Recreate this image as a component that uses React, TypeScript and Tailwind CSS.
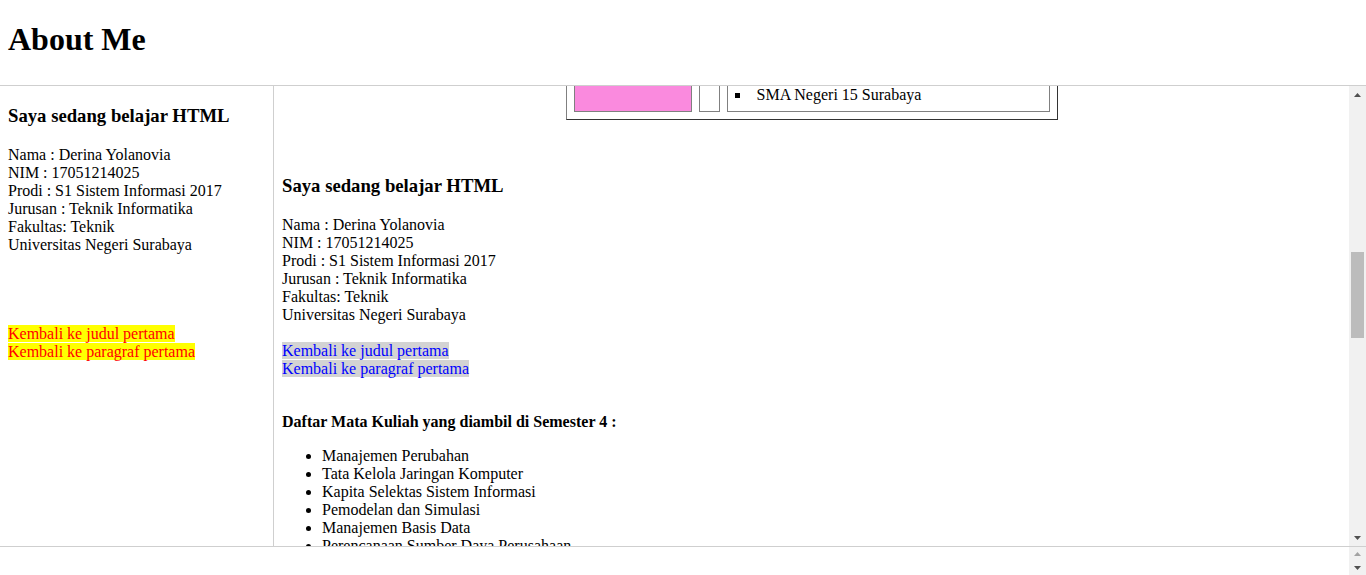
import React from 'react'

const biodata = [
  'Nama : Derina Yolanovia',
  'NIM : 17051214025',
  'Prodi : S1 Sistem Informasi 2017',
  'Jurusan : Teknik Informatika',
  'Fakultas: Teknik',
  'Universitas Negeri Surabaya',
]

const matkul = [
  'Manajemen Perubahan',
  'Tata Kelola Jaringan Komputer',
  'Kapita Selektas Sistem Informasi',
  'Pemodelan dan Simulasi',
  'Manajemen Basis Data',
  'Perencanaan Sumber Daya Perusahaan',
]

function Arrow({ up, color = '#505050' }: { up?: boolean; color?: string }) {
  return (
    <svg width="7" height="4" viewBox="0 0 7 4">
      {up ? <path d="M0 4 L3.5 0 L7 4 Z" fill={color} /> : <path d="M0 0 L7 0 L3.5 4 Z" fill={color} />}
    </svg>
  )
}

function Biodata() {
  return (
    <>
      <h3 className="mt-[18.72px] mb-[18.72px] text-[18.72px] font-bold leading-[22.5px]">
        Saya sedang belajar HTML
      </h3>
      <div className="leading-[18px]">
        {biodata.map((line) => (
          <div key={line}>{line}</div>
        ))}
      </div>
    </>
  )
}

export default function App() {
  return (
    <div className="flex h-[575px] w-[1366px] flex-col overflow-hidden bg-white font-['Liberation_Serif','Times_New_Roman',serif] text-base text-black">
      {/* top frame */}
      <header className="h-[86px] shrink-0 border-b border-[#cfcfcf] px-2">
        <h1 className="mt-[21.44px] text-[32px] font-bold leading-[37px]">About Me</h1>
      </header>

      {/* middle frames */}
      <div className="flex h-[460px] shrink-0">
        <aside className="w-[274px] shrink-0 border-r border-[#cfcfcf] px-2">
          <Biodata />
          <div className="mt-[71px] leading-[18px]">
            <div>
              <a className="bg-[#ffff00] text-[#ff0000]">Kembali ke judul pertama</a>
            </div>
            <div>
              <a className="bg-[#ffff00] text-[#ff0000]">Kembali ke paragraf pertama</a>
            </div>
          </div>
        </aside>

        <main className="flex min-w-0 flex-1">
          <div className="min-w-0 flex-1 overflow-hidden px-2">
            {/* bottom of the table, rest scrolled above */}
            <div className="mx-auto flex w-[492px] gap-[7px] border border-t-0 border-r-[#333] border-b-[#333] border-l-[#808080] px-[7px] pb-[7px]">
              <div className="w-[118px] border border-t-0 border-[#808080] bg-[#fa8ade]" />
              <div className="w-[21px] border border-t-0 border-[#808080]" />
              <div className="w-[323px] border border-t-0 border-[#808080] pb-[7px]">
                <div className="flex items-center pl-[7px] leading-[18px]">
                  <span className="mt-[1px] h-[5px] w-[5px] bg-black" />
                  <span className="ml-[17px]">SMA Negeri 15 Surabaya</span>
                </div>
              </div>
            </div>

            <div className="mt-[55px]">
              <Biodata />
            </div>

            <div className="mt-[18px] leading-[18px]">
              <div>
                <a className="bg-[#d3d3d3] text-[#0000ff]">Kembali ke judul pertama</a>
              </div>
              <div>
                <a className="bg-[#d3d3d3] text-[#0000ff]">Kembali ke paragraf pertama</a>
              </div>
            </div>

            <p className="mt-[35px] font-bold leading-[18px]">Daftar Mata Kuliah yang diambil di Semester 4 :</p>
            <ul className="mt-4 list-disc pl-10 leading-[18px]">
              {matkul.map((m) => (
                <li key={m}>{m}</li>
              ))}
            </ul>
          </div>

          {/* scrollbar */}
          <div className="flex w-[17px] shrink-0 flex-col bg-[#f1f1f1]">
            <div className="flex h-[17px] items-center justify-center">
              <Arrow up />
            </div>
            <div className="flex-1 px-[2px] pt-[149px]">
              <div className="h-[86px] bg-[#bcbcbc]" />
            </div>
            <div className="flex h-[17px] items-center justify-center">
              <Arrow />
            </div>
          </div>
        </main>
      </div>

      {/* bottom frame */}
      <footer className="flex flex-1 border-t border-[#cfcfcf]">
        <div className="flex-1" />
        <div className="flex w-[17px] flex-col bg-[#f1f1f1]">
          <div className="flex h-[14px] items-center justify-center">
            <Arrow up color="#a3a3a3" />
          </div>
          <div className="flex flex-1 items-center justify-center">
            <Arrow />
          </div>
        </div>
      </footer>
    </div>
  )
}
